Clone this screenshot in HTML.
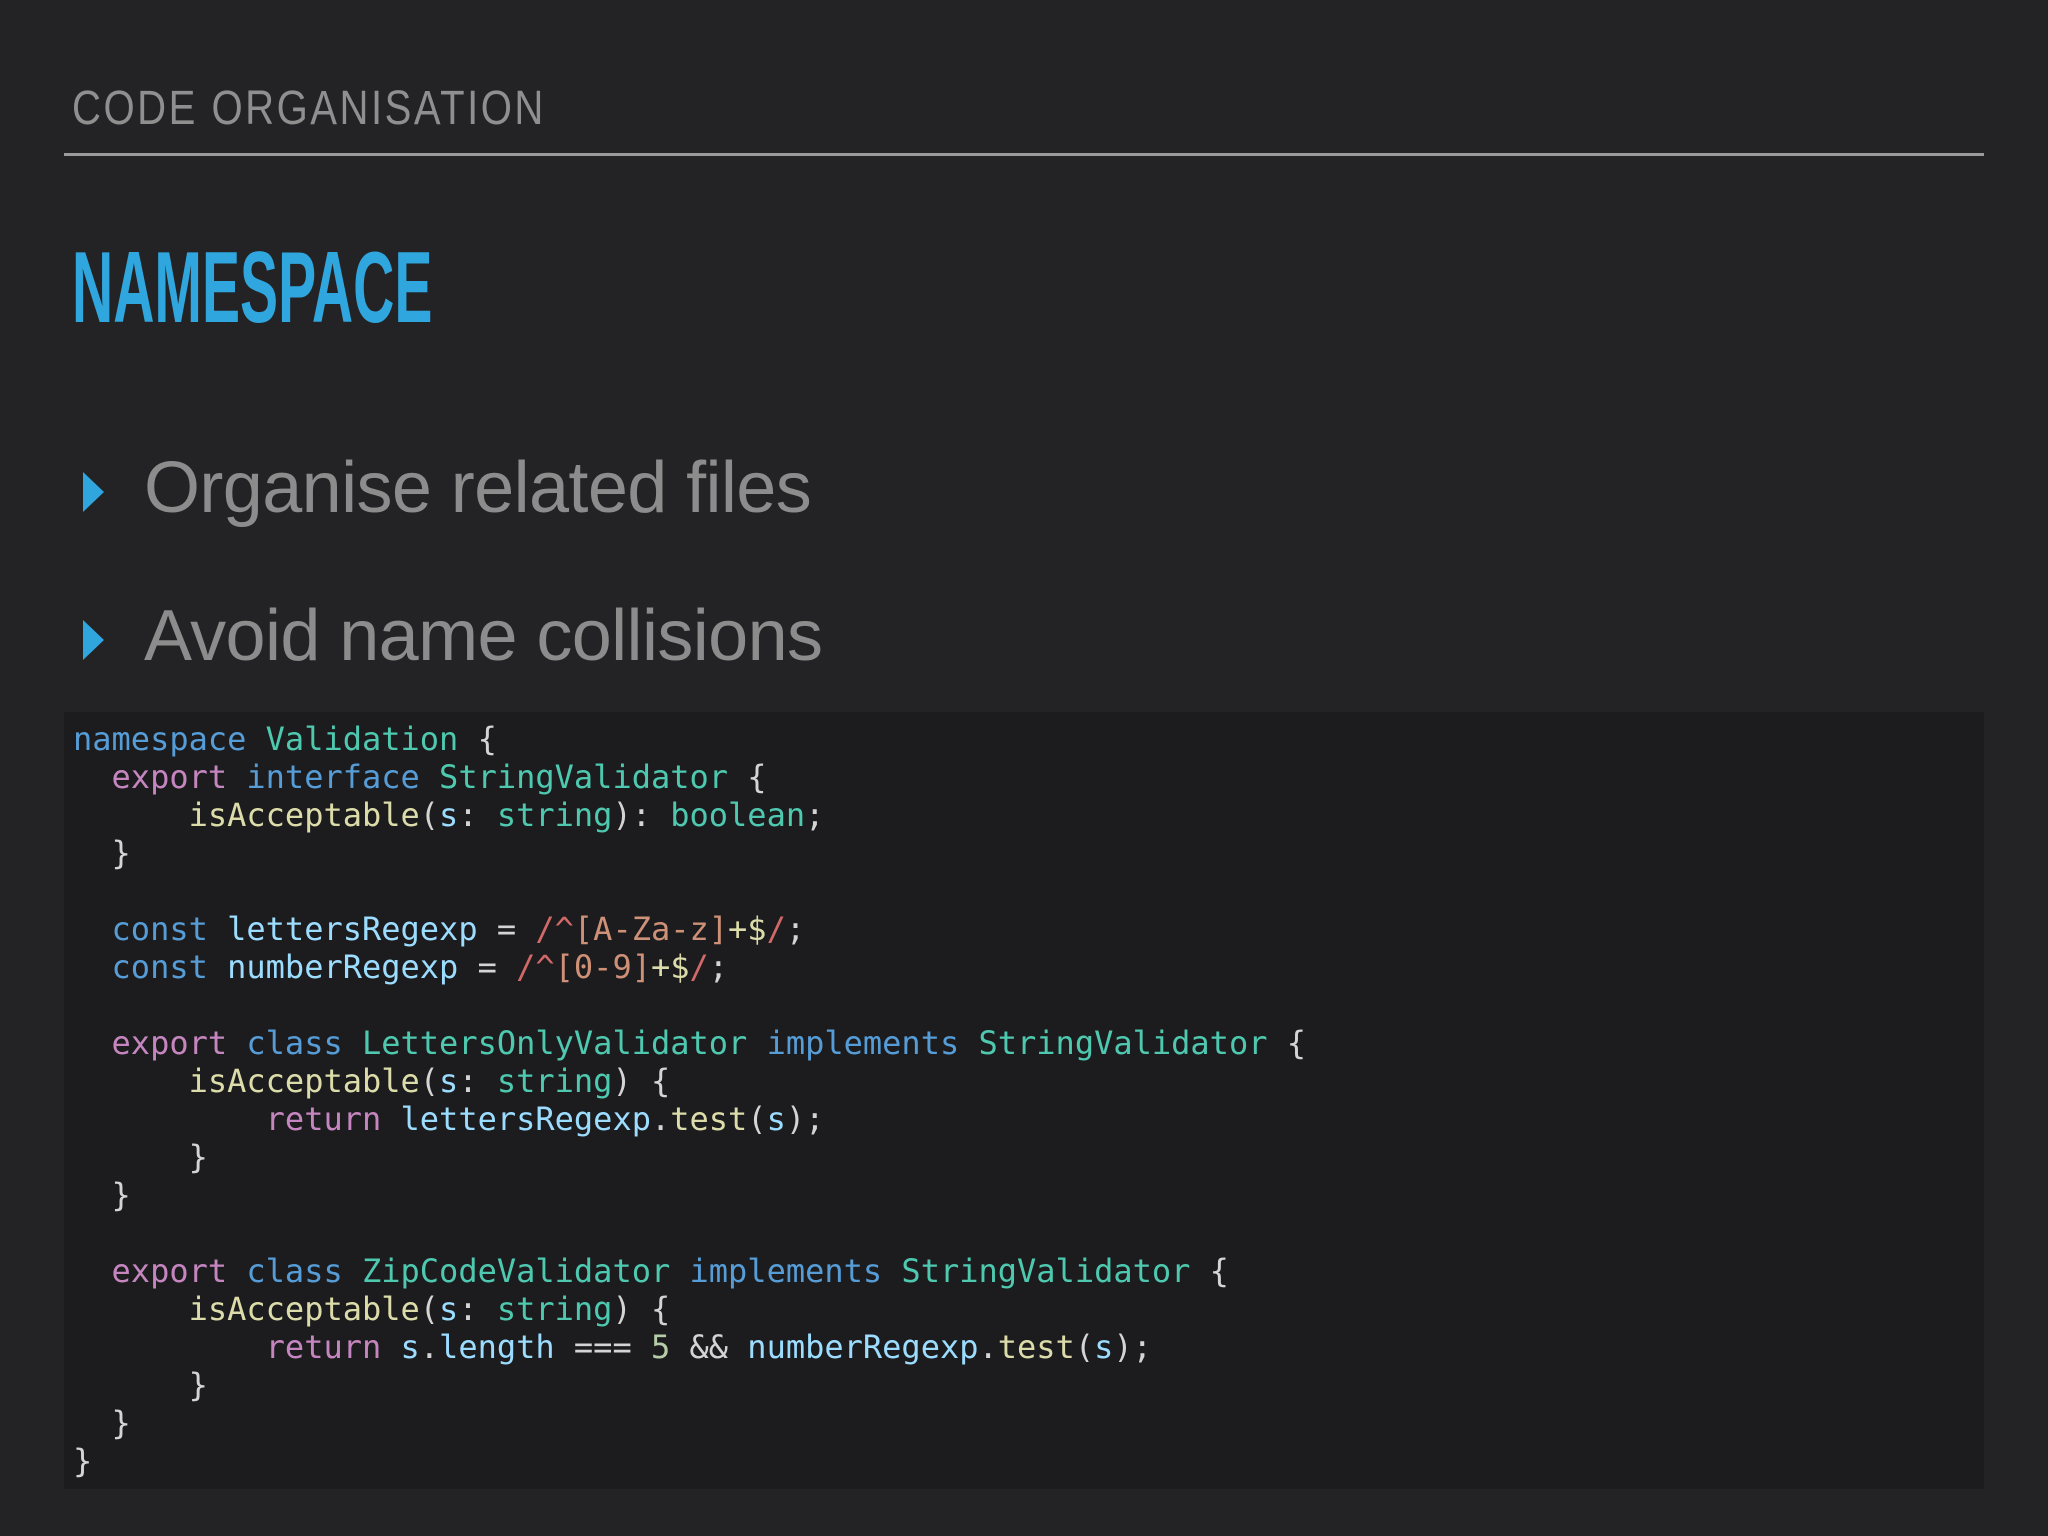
<!DOCTYPE html>
<html><head><meta charset="utf-8"><style>
html,body{margin:0;padding:0;}
body{width:2048px;height:1536px;background:#232325;position:relative;overflow:hidden;font-family:"Liberation Sans",sans-serif;}
.hdr{position:absolute;left:72px;top:81px;font-size:48px;color:#8f8f8f;letter-spacing:3px;transform:scaleX(0.835);transform-origin:left top;white-space:nowrap;}
.rule{position:absolute;left:64px;top:153px;width:1920px;height:3px;background:#9a9a9a;}
.title{position:absolute;left:72px;top:228px;font-size:101px;font-weight:bold;color:#30a6de;transform:scaleX(0.565);transform-origin:left top;white-space:nowrap;line-height:1.2;}
.b{position:absolute;left:144px;font-size:72px;color:#8c8c8c;white-space:nowrap;line-height:1;letter-spacing:-0.6px;}
.tri{position:absolute;left:83px;width:0;height:0;border-top:20px solid transparent;border-bottom:20px solid transparent;border-left:21px solid #30a6de;}
.code{position:absolute;left:64px;top:712px;width:1920px;height:777px;background:#1c1c1e;}
pre{position:absolute;left:73px;top:720px;margin:0;font-family:"DejaVu Sans Mono","Liberation Mono",monospace;font-size:32px;line-height:38px;color:#d4d4d4;}
.k{color:#569cd6}.p{color:#c586c0}.t{color:#4ec9b0}.f{color:#dcdcaa}.v{color:#9cdcfe}.r{color:#d16969}.c{color:#ce9178}.g{color:#dcdcaa}.n{color:#b5cea8}
</style></head><body>
<div class="hdr">CODE ORGANISATION</div>
<div class="rule"></div>
<div class="title">NAMESPACE</div>
<div class="tri" style="top:472px"></div>
<div class="b" style="top:452px">Organise related files</div>
<div class="tri" style="top:620px"></div>
<div class="b" style="top:600px">Avoid name collisions</div>
<div class="code"></div>
<pre><span class="k">namespace</span> <span class="t">Validation</span> {
  <span class="p">export</span> <span class="k">interface</span> <span class="t">StringValidator</span> {
      <span class="f">isAcceptable</span>(<span class="v">s</span>: <span class="t">string</span>): <span class="t">boolean</span>;
  }

  <span class="k">const</span> <span class="v">lettersRegexp</span> = <span class="r">/^</span><span class="c">[A-Za-z]</span><span class="g">+$</span><span class="r">/</span>;
  <span class="k">const</span> <span class="v">numberRegexp</span> = <span class="r">/^</span><span class="c">[0-9]</span><span class="g">+$</span><span class="r">/</span>;

  <span class="p">export</span> <span class="k">class</span> <span class="t">LettersOnlyValidator</span> <span class="k">implements</span> <span class="t">StringValidator</span> {
      <span class="f">isAcceptable</span>(<span class="v">s</span>: <span class="t">string</span>) {
          <span class="p">return</span> <span class="v">lettersRegexp</span>.<span class="f">test</span>(<span class="v">s</span>);
      }
  }

  <span class="p">export</span> <span class="k">class</span> <span class="t">ZipCodeValidator</span> <span class="k">implements</span> <span class="t">StringValidator</span> {
      <span class="f">isAcceptable</span>(<span class="v">s</span>: <span class="t">string</span>) {
          <span class="p">return</span> <span class="v">s</span>.<span class="v">length</span> === <span class="n">5</span> &amp;&amp; <span class="v">numberRegexp</span>.<span class="f">test</span>(<span class="v">s</span>);
      }
  }
}</pre>
</body></html>
